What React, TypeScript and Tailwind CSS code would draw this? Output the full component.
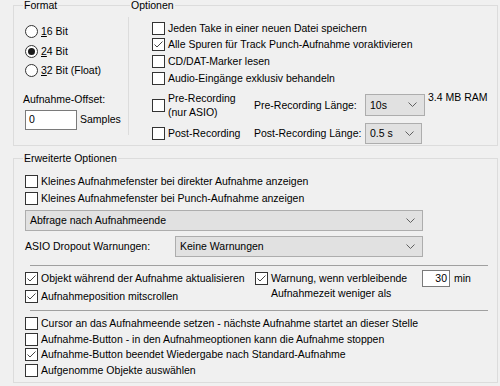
import React from "react";

function Check({ checked }: { checked?: boolean }) {
  return (
    <span className="w-[13px] h-[13px] shrink-0 border border-[#333333] bg-white flex items-center justify-center">
      {checked && (
        <svg width="11" height="11" viewBox="0 0 11 11">
          <path d="M1.5 5.5 L4 8 L9.5 2.5" fill="none" stroke="#444444" strokeWidth="1" />
        </svg>
      )}
    </span>
  );
}

function Radio({ checked }: { checked?: boolean }) {
  return (
    <span className="w-[13px] h-[13px] shrink-0 rounded-full border border-[#333333] bg-white flex items-center justify-center">
      {checked && <span className="w-[7px] h-[7px] rounded-full bg-[#1a1a1a]" />}
    </span>
  );
}

function Chevron() {
  return (
    <svg width="9" height="6" viewBox="0 0 9 6" className="shrink-0">
      <path d="M0.5 0.5 L4.5 4.5 L8.5 0.5" fill="none" stroke="#606060" strokeWidth="1" />
    </svg>
  );
}

function Combo({ value, className }: { value: string; className: string }) {
  return (
    <div className={`flex items-center justify-between shrink-0 bg-[#e1e1e1] border border-[#adadad] pl-[4px] pr-[7px] ${className}`}>
      <span className="whitespace-nowrap">{value}</span>
      <Chevron />
    </div>
  );
}

function CheckRow({ label, checked, className = "" }: { label: string; checked?: boolean; className?: string }) {
  return (
    <div className={`flex items-center gap-[3px] ${className}`}>
      <Check checked={checked} />
      <span className="whitespace-nowrap">{label}</span>
    </div>
  );
}

export default function App() {
  return (
    <div
      className="w-[500px] h-[386px] bg-[#f0f0f0] text-black text-[10.5px] leading-[13px] pl-[13px] pr-[2px] pt-[5px] overflow-hidden"
      style={{ fontFamily: '"Liberation Sans", Arial, sans-serif' }}
    >
      {/* Format + Optionen */}
      <div className="relative h-[141px] border border-[#dcdcdc] flex">
        <span className="absolute left-[9px] top-[-7px] bg-[#f0f0f0] px-[1px]">Format</span>
        <span className="absolute left-[116px] top-[-7px] bg-[#f0f0f0] px-[1px]">Optionen</span>

        <div className="w-[114px] shrink-0 pl-[11px] pt-[16px] flex flex-col">
          {[
            { k: "1", rest: "6 Bit", on: false },
            { k: "2", rest: "4 Bit", on: true },
            { k: "3", rest: "2 Bit (Float)", on: false },
          ].map((r) => (
            <div key={r.k} className="h-[19.5px] flex items-center gap-[3px]">
              <Radio checked={r.on} />
              <span>
                <span className="underline">{r.k}</span>
                {r.rest}
              </span>
            </div>
          ))}
          <div className="mt-[12px] -ml-[2px]">Aufnahme-Offset:</div>
          <div className="mt-[4px] flex items-center gap-[3px]">
            <div className="w-[52px] h-[20px] bg-white border border-[#7a7a7a] pl-[3px] flex items-center">0</div>
            <span>Samples</span>
          </div>
        </div>

        <div className="mt-[11px] mb-[10px] border-l border-[#dcdcdc]" />

        <div className="flex-1 pl-[23px] pt-[14px] flex flex-col">
          <CheckRow label="Jeden Take in einer neuen Datei speichern" className="h-[17px]" />
          <CheckRow label="Alle Spuren für Track Punch-Aufnahme voraktivieren" checked className="h-[17px]" />
          <CheckRow label="CD/DAT-Marker lesen" className="h-[17px]" />
          <CheckRow label="Audio-Eingänge exklusiv behandeln" className="h-[17px]" />
          <div className="mt-[3px] flex items-start">
            <div className="w-[102px] shrink-0 flex items-center gap-[3px] h-[31px]">
              <Check />
              <span className="leading-[14px]">
                Pre-Recording
                <br />
                (nur ASIO)
              </span>
            </div>
            <div className="flex items-center h-[31px]">
              <span className="w-[111px] shrink-0 whitespace-nowrap">Pre-Recording Länge:</span>
              <Combo value="10s" className="w-[60px] h-[22px]" />
            </div>
            <span className="ml-[3px] mt-[1px] whitespace-nowrap">3.4 MB RAM</span>
          </div>
          <div className="flex items-center h-[23px] mt-[2px]">
            <div className="w-[102px] shrink-0 flex items-center gap-[3px]">
              <Check />
              <span className="whitespace-nowrap">Post-Recording</span>
            </div>
            <span className="w-[111px] shrink-0 whitespace-nowrap">Post-Recording Länge:</span>
            <Combo value="0.5 s" className="w-[57px] h-[21px]" />
          </div>
        </div>
      </div>

      {/* Erweiterte Optionen */}
      <div className="relative mt-[12px] h-[225px] border border-[#dcdcdc] pl-[11px] pt-[14px]">
        <span className="absolute left-[9px] top-[-7px] bg-[#f0f0f0] px-[1px]">Erweiterte Optionen</span>
        <CheckRow label="Kleines Aufnahmefenster bei direkter Aufnahme anzeigen" className="h-[17px]" />
        <CheckRow label="Kleines Aufnahmefenster bei Punch-Aufnahme anzeigen" className="h-[17px]" />
        <Combo value="Abfrage nach Aufnahmeende" className="mt-[3px] w-[398px] h-[21px]" />
        <div className="mt-[5px] flex items-center">
          <span className="w-[150px] shrink-0">ASIO Dropout Warnungen:</span>
          <Combo value="Keine Warnungen" className="w-[248px] h-[21px]" />
        </div>
        <div className="mt-[8px] ml-[5px] mr-[9px] border-t border-[#a0a0a0]" />
        <div className="mt-[4px] flex h-[36px]">
          <div className="w-[230px] shrink-0 flex flex-col">
            <CheckRow label="Objekt während der Aufnahme aktualisieren" checked className="h-[17px]" />
            <CheckRow label="Aufnahmeposition mitscrollen" checked className="h-[19px]" />
          </div>
          <div className="flex items-start">
            <div className="flex items-start gap-[3px] pt-[2px]">
              <Check checked />
              <span className="w-[150px] leading-[15px] -mt-[1px]">
                Warnung, wenn verbleibende
                <br />
                Aufnahmezeit weniger als
              </span>
            </div>
            <div className="ml-[1px] w-[28px] h-[17px] bg-white border border-[#7a7a7a] flex items-center justify-end pr-[2px]">30</div>
            <span className="ml-[4px] mt-[2px]">min</span>
          </div>
        </div>
        <div className="mt-[4px] ml-[5px] mr-[9px] border-t border-[#a0a0a0]" />
        <div className="mt-[5px] flex flex-col">
          <CheckRow label="Cursor an das Aufnahmeende setzen - nächste Aufnahme startet an dieser Stelle" className="h-[15.5px]" />
          <CheckRow label="Aufnahme-Button -  in den Aufnahmeoptionen kann die Aufnahme stoppen" className="h-[15.5px]" />
          <CheckRow label="Aufnahme-Button beendet Wiedergabe nach Standard-Aufnahme" checked className="h-[15.5px]" />
          <CheckRow label="Aufgenomme Objekte auswählen" className="h-[15.5px]" />
        </div>
      </div>
    </div>
  );
}
